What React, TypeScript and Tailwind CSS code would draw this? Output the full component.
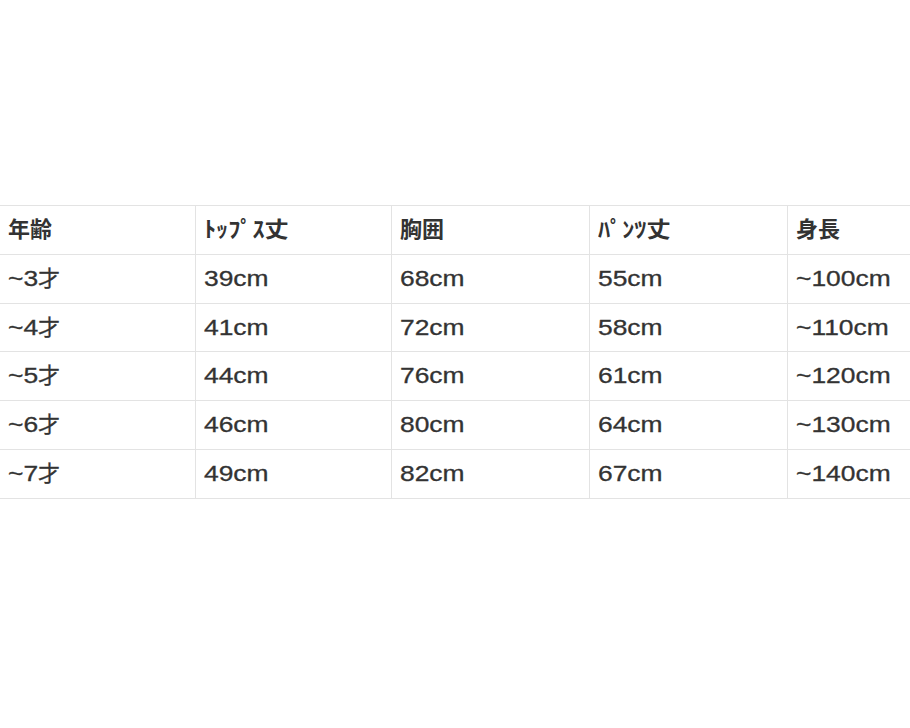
const header = ['年齢', 'ﾄｯﾌﾟｽ丈', '胸囲', 'ﾊﾟﾝﾂ丈', '身長']

const rows = [
  ['~3', '39cm', '68cm', '55cm', '~100cm'],
  ['~4', '41cm', '72cm', '58cm', '~110cm'],
  ['~5', '44cm', '76cm', '61cm', '~120cm'],
  ['~6', '46cm', '80cm', '64cm', '~130cm'],
  ['~7', '49cm', '82cm', '67cm', '~140cm'],
]

const font = { fontFamily: '"Liberation Sans", "Noto Sans CJK JP", sans-serif' }

const cellCls = 'flex items-center pl-2 border-b border-[#e3e3e3] overflow-hidden whitespace-nowrap text-[22px] leading-none text-[#333]'

export default function App() {
  return (
    <div className="w-[910px] h-[728px] bg-white overflow-hidden" style={font}>
      <div className="pt-[205px]">
        <div className="grid w-[985px] grid-cols-[195px_196px_198px_198px_198px] grid-rows-[49px_49px_48px_49px_49px_49px] border-t border-[#e3e3e3]">
          {header.map((h, i) => (
            <div key={h} className={cellCls + ' font-bold ' + (i > 0 ? 'border-l' : '')}>
              <span className={h.length > 2 ? 'inline-block origin-left scale-x-[1.1]' : ''}>{h}</span>
            </div>
          ))}
          {rows.map((r) =>
            r.map((c, i) => (
              <div key={r[0] + i} className={cellCls + ' ' + (i > 0 ? 'border-l' : '')}>
                {/* latin run drawn a bit wider, like the source font */}
                <span
                  className={
                    'inline-block origin-left scale-x-[1.2] [-webkit-text-stroke:0.3px_#333] ' +
                    (i === 0 ? 'mr-[5px]' : '')
                  }
                >
                  {c}
                </span>
                {i === 0 && <span className="[-webkit-text-stroke:0.3px_#333]">才</span>}
              </div>
            ))
          )}
        </div>
      </div>
    </div>
  )
}
